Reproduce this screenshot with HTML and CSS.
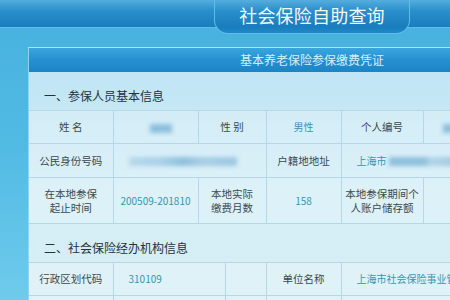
FILE: index.html
```html
<!DOCTYPE html>
<html lang="zh-CN">
<head>
  <meta charset="UTF-8">
  <meta name="viewport" content="width=device-width, initial-scale=1.0">
  <title>社会保险自助查询</title>
  <link rel="stylesheet" href="styles.css">
</head>
<body>
  <!-- 顶部标题栏 -->
  <div id="topbar">
    <div class="tab"><h1>社会保险自助查询</h1></div>
  </div>

  <div id="card">
    <div class="card-head">基本养老保险参保缴费凭证</div>
    <div class="card-body">
      <h2 class="sec">一、参保人员基本信息</h2>
      <table class="info t1">
        <colgroup>
          <col style="width:84px"><col style="width:85px"><col style="width:68px">
          <col style="width:75px"><col style="width:82px"><col style="width:60px">
        </colgroup>
        <tr class="r1">
          <td class="label">姓&nbsp;名</td>
          <td><span class="blur short"></span></td>
          <td class="label">性&nbsp;别</td>
          <td class="val">男性</td>
          <td class="label">个人编号</td>
          <td class="left"><span class="blur tiny"></span></td>
        </tr>
        <tr class="r2">
          <td class="label">公民身份号码</td>
          <td colspan="2" class="left"><span class="blur long"></span></td>
          <td class="label">户籍地地址</td>
          <td colspan="2" class="val left">上海市<span class="blur addr"></span></td>
        </tr>
        <tr class="r3">
          <td class="label">在本地参保<br>起止时间</td>
          <td class="val">200509-201810</td>
          <td class="label">本地实际<br>缴费月数</td>
          <td class="val">158</td>
          <td class="label">本地参保期间个<br>人账户储存额</td>
          <td></td>
        </tr>
      </table>

      <h2 class="sec">二、社会保险经办机构信息</h2>
      <table class="info t2">
        <colgroup>
          <col style="width:84px"><col style="width:112px"><col style="width:41px">
          <col style="width:75px"><col style="width:150px">
        </colgroup>
        <tr class="r1">
          <td class="label">行政区划代码</td>
          <td class="val left">310109</td>
          <td></td>
          <td class="label">单位名称</td>
          <td class="val left">上海市社会保险事业管理中心</td>
        </tr>
        <tr class="r1">
          <td></td><td></td><td></td><td></td><td></td>
        </tr>
      </table>
    </div>
  </div>
</body>
</html>
```

FILE: styles.css
```css
html, body {
  margin: 0;
  overflow: hidden;
}

body {
  width: 450px;
  height: 300px;
  font-family: "Noto Sans CJK SC", "Noto Sans", sans-serif;
  background: linear-gradient(180deg, #46b0de 0%, #52bbe4 50%, #6fcbec 100%);
}

/* 顶部标题栏 */
#topbar {
  height: 27px;
  display: flex;
  padding-left: 214px;
  background: linear-gradient(180deg, #55addd 0%, #2a8fcc 40%, #1a7dbd 100%);
  border-bottom: 1px solid #62bde6;
}

#topbar .tab {
  width: 194px;
  height: 33px;
  background: linear-gradient(180deg, #55addd 0%, #2a8fcc 33%, #1a7dbd 80%, #2088c6 100%);
  border: 1px solid #62bde6;
  border-top: none;
  border-radius: 0 0 14px 14px;
  text-align: center;
}

#topbar h1 {
  margin: 0;
  padding-top: 4px;
  font-size: 18px;
  line-height: 22px;
  font-weight: normal;
  color: #f4fbff;
  letter-spacing: 0.2px;
}

/* 凭证卡片 */
#card {
  margin: 19px 0 0 28px;
  border-top: 1px solid #a6e6fa;
  border-left: 1px solid #8ad6f2;
}

.card-head {
  height: 24px;
  line-height: 24px;
  padding-left: 211px;
  font-size: 12px;
  color: #d6efff;
  background: linear-gradient(180deg, #3aa6de 0%, #2590d0 50%, #1b84c5 100%);
  white-space: nowrap;
}

.card-body {
  background: linear-gradient(180deg, #c0e5f4 0%, #d3edf7 45%, #d9f0f4 100%);
  padding-bottom: 10px;
}

.sec {
  margin: 0;
  padding: 17px 0 7px 15px;
  font-size: 12px;
  line-height: 14px;
  font-weight: normal;
  color: #25323c;
}

.info {
  border-collapse: collapse;
  table-layout: fixed;
}

.info.t1 { width: 454px; }
.info.t2 { width: 462px; }

.info td {
  border: 1px solid #b6d8e6;
  background: rgba(255, 255, 255, 0.22);
  text-align: center;
  font-size: 10.5px;
  line-height: 14px;
  color: #3b4852;
  padding: 0;
  white-space: nowrap;
  overflow: hidden;
}

.info td:first-child {
  border-left: none;
}

.info .r1 td { height: 32px; }
.info .r2 td { height: 33px; }
.info .r3 td { height: 45px; }

.info td.val {
  color: #3596b5;
  font-size: 10px;
}

.info td.left {
  text-align: left;
  padding-left: 15px;
}

/* 打码部分 */
.blur {
  display: inline-block;
  vertical-align: middle;
  height: 9px;
  background: #8dbfdb;
  filter: blur(2px);
}

.blur.short { width: 22px; margin-left: 10px; }
.blur.tiny { width: 16px; margin-left: 4px; }
.blur.long {
  width: 108px;
  background: linear-gradient(90deg, #b7d9ea 0%, #a9d0e6 30%, #8ebfdc 50%, #a8cfe5 70%, #9cc7e0 100%);
}
.blur.addr {
  width: 70px;
  margin-left: 2px;
  background: linear-gradient(90deg, #8fc0dc 0%, #8fc0dc 50%, #b1d5e8 60%, #9fc9e1 100%);
}
```
